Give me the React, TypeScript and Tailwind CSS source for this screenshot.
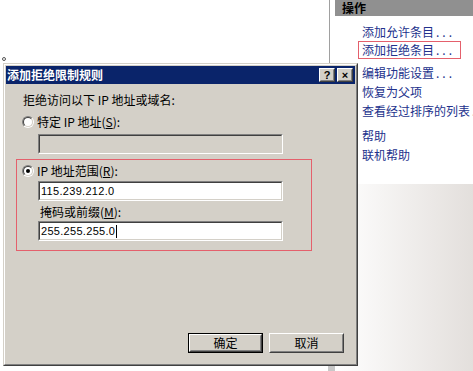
import type { ReactNode } from 'react';

const cjk = "font-['Noto_Sans_CJK_SC',sans-serif]";

interface FieldProps {
  value?: string;
  disabled?: boolean;
  caret?: boolean;
  className?: string;
}

const Field = ({ value, disabled, caret, className = '' }: FieldProps) => (
  <div className={`h-[20px] w-[245px] border border-t-[#808080] border-l-[#808080] border-r-white border-b-white ${className}`}>
    <div
      className={`flex h-full w-full items-center border border-t-[#404040] border-l-[#404040] border-r-[#d4d0c8] border-b-[#d4d0c8] pl-[1px] ${
        disabled ? 'bg-[#d4d0c8]' : 'bg-white'
      }`}
    >
      <span className="font-['Liberation_Sans',sans-serif] text-[11px] leading-[13px] tracking-[0.3px] text-black">{value}</span>
      {caret && <span className="ml-[1px] h-[13px] w-[1px] bg-black" />}
    </div>
  </div>
);

const Radio = ({ checked }: { checked?: boolean }) => (
  <span className="flex h-[12px] w-[12px] items-center justify-center rounded-full border border-t-[#808080] border-l-[#808080] border-r-white border-b-white">
    <span className="flex h-[10px] w-[10px] items-center justify-center rounded-full border border-t-[#404040] border-l-[#404040] border-r-[#d4d0c8] border-b-[#d4d0c8] bg-white">
      {checked && <span className="h-[4px] w-[4px] rounded-full bg-black" />}
    </span>
  </span>
);

const Button = ({ children, primary }: { children: ReactNode; primary?: boolean }) => (
  <div className={`h-[20px] w-[75px] ${primary ? 'border border-black' : ''}`}>
    <div className="h-full w-full border border-t-white border-l-white border-r-[#404040] border-b-[#404040]">
      <div className="flex h-full w-full items-center justify-center border border-t-[#d4d0c8] border-l-[#d4d0c8] border-r-[#808080] border-b-[#808080] text-[12px] leading-[14px] text-black">
        {children}
      </div>
    </div>
  </div>
);

const CaptionButton = ({ children }: { children: ReactNode }) => (
  <div className="h-[14px] w-[16px] border border-t-white border-l-white border-r-[#404040] border-b-[#404040] bg-[#d4d0c8]">
    <div className="flex h-full w-full items-center justify-center border border-t-[#d4d0c8] border-l-[#d4d0c8] border-r-[#808080] border-b-[#808080] font-['Liberation_Sans',sans-serif] text-[11px] font-bold leading-none text-black">
      {children}
    </div>
  </div>
);

const actions = [
  { group: 0, label: '添加允许条目', dots: true },
  { group: 0, label: '添加拒绝条目', dots: true, marked: true },
  { group: 1, label: '编辑功能设置', dots: true },
  { group: 1, label: '恢复为父项' },
  { group: 1, label: '查看经过排序的列表', dots: true },
  { group: 2, label: '帮助' },
  { group: 2, label: '联机帮助' },
];

export default function App() {
  return (
    <div className={`relative flex h-[371px] w-[473px] overflow-hidden bg-white ${cjk}`}>
      {/* page behind the dialog */}
      <div className="flex-1 bg-white" />

      <div className="flex w-[144px] flex-col border-l border-[#a0a0a0] pl-[5px]">
        <div className="flex h-[16px] items-center bg-[#909090] pl-[7px] text-[12px] font-bold leading-[14px] text-black">
          操作
        </div>
        <div className="flex flex-col pl-[27px] pt-[7px]">
          {[0, 1, 2].map((g) => (
            <div key={g} className={`flex flex-col ${g === 1 ? 'mt-[4px]' : g === 2 ? 'mt-[6px]' : ''}`}>
              {actions
                .filter((a) => a.group === g)
                .map((a) => (
                  <div
                    key={a.label}
                    className={`flex items-center whitespace-nowrap text-[12px] text-[#22318c] ${
                      g === 0 ? 'h-[18px]' : 'h-[19px]'
                    } ${a.marked ? '-ml-[4px] w-[103px] border border-[#e4606c] pl-[3px]' : ''}`}
                  >
                    {a.label}
                    {a.dots && <span className="ml-[2px] tracking-[3px]">...</span>}
                  </div>
                ))}
            </div>
          ))}
        </div>
        <div className="h-[20px]" />
        <div className="flex-1 bg-gradient-to-r from-white to-[#e3dfdc]" />
      </div>

      {/* stray dot */}
      <span className="absolute left-[2px] top-[57px] h-[4px] w-[4px] rounded-full border border-[#555]" />

      {/* scrollbar stub under the dialog */}
      <span className="absolute left-[328px] top-[366px] h-[5px] w-[7px] bg-[#c8c8c8]" />

      {/* dialog */}
      <div className="absolute left-[3px] top-[63px] h-[303px] w-[355px] border border-t-[#d4d0c8] border-l-[#d4d0c8] border-r-[#404040] border-b-[#404040]">
        <div className="flex h-full w-full flex-col border border-t-white border-l-white border-r-[#808080] border-b-[#808080] bg-[#d4d0c8] p-[1px]">
          <div className="flex h-[18px] items-center bg-[#0a246a] pl-[1px] pr-[2px]">
            <span className="flex-1 text-[12px] font-bold leading-[14px] text-white">添加拒绝限制规则</span>
            <div className="flex gap-[2px]">
              <CaptionButton>?</CaptionButton>
              <CaptionButton>×</CaptionButton>
            </div>
          </div>

          <div className="flex flex-1 flex-col pb-[10px] pl-[10px] pr-[11px] pt-[9px] text-[12px] leading-[14px] text-black">
            <div className="ml-[7px] h-[14px]">拒绝访问以下 IP 地址或域名:</div>

            <div className="ml-[6px] mt-[8px] flex h-[14px] items-center gap-[3px]">
              <Radio />
              <span>
                特定 IP 地址(<u>S</u>):
              </span>
            </div>
            <Field disabled className="ml-[22px] mt-[5px]" />

            <div className="mt-[5px] flex h-[92px] w-[296px] flex-col border border-[#e4606c] pt-[4px]">
              <div className="ml-[5px] flex h-[14px] items-center gap-[3px]">
                <Radio checked />
                <span>
                  IP 地址范围(<u>R</u>):
                </span>
              </div>
              <Field value="115.239.212.0" className="ml-[21px] mt-[3px]" />
              <div className="ml-[23px] mt-[4px] h-[14px]">
                掩码或前缀(<u>M</u>):
              </div>
              <Field value="255.255.255.0" caret className="ml-[21px] mt-[2px]" />
            </div>

            <div className="flex-1" />
            <div className="flex justify-end gap-[6px]">
              <Button primary>确定</Button>
              <Button>取消</Button>
            </div>
          </div>
        </div>
      </div>
    </div>
  );
}
